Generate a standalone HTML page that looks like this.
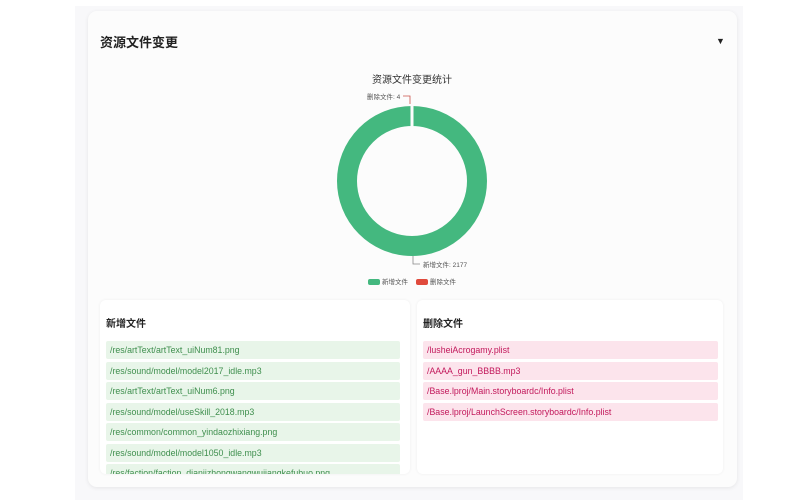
<!DOCTYPE html><html><head><meta charset="utf-8"><style>
body{margin:0;width:800px;height:500px;background:#fff;font-family:"Liberation Sans","Noto Sans CJK SC",sans-serif;position:relative;overflow:hidden}
.bg{position:absolute;left:75px;top:6px;width:668px;height:494px;background:#f8f8fa}
.card{position:absolute;left:88px;top:11px;width:649px;height:476px;background:#fcfcfc;border-radius:9px;box-shadow:0 1px 4px rgba(0,0,0,.08)}
.t{position:absolute;left:100px;top:32px;font-size:13px;font-weight:bold;color:#222}
.arr{position:absolute;left:716px;top:36px;font-size:9px;color:#222}
.panel{position:absolute;top:300px;height:174px;background:#fff;border-radius:6px;box-shadow:0 0 3px rgba(0,0,0,.06);overflow:hidden}
.panel h4{margin:0;position:absolute;left:6px;top:15px;font-size:10px;color:#222}
.it{position:absolute;left:6px;height:18px;line-height:18px;font-size:8.8px;padding-left:4px;border-radius:2px}
.g{background:#e8f5e9;color:#3f8f4e;width:290px}
.r{background:#fce4ec;color:#c2185b;width:291px}
</style></head><body>
<div class="bg"></div><div class="card"></div>
<div class="t">资源文件变更</div><div class="arr">▼</div>
<svg style="position:absolute;left:0;top:0" width="800" height="300">
<text x="412" y="83" text-anchor="middle" font-size="10" fill="#333" font-family="Liberation Sans,Noto Sans CJK SC,sans-serif">资源文件变更统计</text>
<circle cx="412" cy="181" r="65" fill="none" stroke="#44b87f" stroke-width="20"/>
<line x1="412" y1="105" x2="412" y2="127" stroke="#fcfcfc" stroke-width="3"/>
<polyline points="403,96 410,96 410,104" fill="none" stroke="#c9504a" stroke-width="0.8"/>
<text x="367" y="99" font-size="6.5" fill="#555" font-family="Liberation Sans,Noto Sans CJK SC,sans-serif">删除文件: 4</text>
<polyline points="413,256 413,264 420,264" fill="none" stroke="#888" stroke-width="0.8"/>
<text x="423" y="267" font-size="6.5" fill="#555" font-family="Liberation Sans,Noto Sans CJK SC,sans-serif">新增文件: 2177</text>
<rect x="368" y="279" width="12" height="6" rx="2" fill="#44b87f"/>
<text x="382" y="284" font-size="6.5" fill="#555" font-family="Liberation Sans,Noto Sans CJK SC,sans-serif">新增文件</text>
<rect x="416" y="279" width="12" height="6" rx="2" fill="#e04a3c"/>
<text x="430" y="284" font-size="6.5" fill="#555" font-family="Liberation Sans,Noto Sans CJK SC,sans-serif">删除文件</text>
</svg>
<div class="panel" style="left:100px;width:310px"><h4>新增文件</h4>
<div class="it g" style="top:41px">/res/artText/artText_uiNum81.png</div>
<div class="it g" style="top:61.5px">/res/sound/model/model2017_idle.mp3</div>
<div class="it g" style="top:82px">/res/artText/artText_uiNum6.png</div>
<div class="it g" style="top:102.5px">/res/sound/model/useSkill_2018.mp3</div>
<div class="it g" style="top:123px">/res/common/common_yindaozhixiang.png</div>
<div class="it g" style="top:143.5px">/res/sound/model/model1050_idle.mp3</div>
<div class="it g" style="top:164px">/res/faction/faction_dianjizhongwangwujiangkefubuo.png</div>
</div>
<div class="panel" style="left:417px;width:306px"><h4>删除文件</h4>
<div class="it r" style="top:41px">/lusheiAcrogamy.plist</div>
<div class="it r" style="top:61.5px">/AAAA_gun_BBBB.mp3</div>
<div class="it r" style="top:82px">/Base.lproj/Main.storyboardc/Info.plist</div>
<div class="it r" style="top:102.5px">/Base.lproj/LaunchScreen.storyboardc/Info.plist</div>
</div>
</body></html>
